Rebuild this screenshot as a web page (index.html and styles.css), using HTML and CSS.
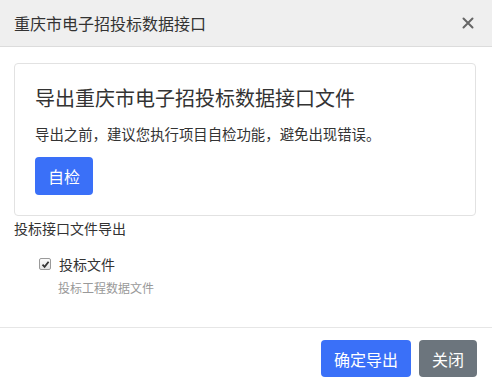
FILE: index.html
```html
<!DOCTYPE html>
<html lang="zh-CN">
<head>
    <meta charset="UTF-8">
    <meta name="viewport" content="width=device-width, initial-scale=1.0">
    <title>重庆市电子招投标数据接口</title>
    <link rel="stylesheet" href="styles.css">
</head>
<body>
    <div class="modal">
        <!-- Header -->
        <div class="modal-header">
            <span class="modal-title">重庆市电子招投标数据接口</span>
            <span class="close">
                <svg width="12" height="12" viewBox="0 0 12 12">
                    <path d="M1.5 1.5 L10.5 10.5 M10.5 1.5 L1.5 10.5" stroke="#666" stroke-width="2" stroke-linecap="round"/>
                </svg>
            </span>
        </div>

        <!-- Body -->
        <div class="modal-body">
            <div class="card">
                <h2>导出重庆市电子招投标数据接口文件</h2>
                <p>导出之前，建议您执行项目自检功能，避免出现错误。</p>
                <button class="btn btn-primary">自检</button>
            </div>

            <div class="section-title">投标接口文件导出</div>

            <div class="file-item">
                <label class="check-row">
                    <span class="checkbox">
                        <svg width="9" height="9" viewBox="0 0 9 9">
                            <path d="M1.5 4.6 L3.6 6.8 L7.6 1.8" stroke="#333" stroke-width="1.8" fill="none"/>
                        </svg>
                    </span>
                    投标文件
                </label>
                <div class="file-desc">投标工程数据文件</div>
            </div>
        </div>

        <!-- Footer -->
        <div class="modal-footer">
            <button class="btn btn-primary">确定导出</button>
            <button class="btn btn-secondary">关闭</button>
        </div>
    </div>
</body>
</html>
```

FILE: styles.css
```css
body {
    font-family: "Noto Sans CJK SC", "Liberation Sans", sans-serif;
    margin: 0;
    padding: 0;
    background-color: #fff;
    color: #333;
}

.modal {
    display: flex;
    flex-direction: column;
    height: 100vh;
}

/* Header */
.modal-header {
    display: flex;
    align-items: center;
    justify-content: space-between;
    height: 46px;
    padding: 0 18px 0 14px;
    background-color: #efefef;
    border-bottom: 1px solid #dcdcdc;
}

.modal-title {
    font-size: 16px;
    line-height: 20px;
}

.close {
    display: flex;
    cursor: pointer;
}

/* Body */
.modal-body {
    flex: 1;
    padding: 16px 16px 0 14px;
}

.card {
    border: 1px solid #e2e2e2;
    border-radius: 4px;
    padding: 22px 20px 20px;
}

.card h2 {
    margin: 0 0 12px;
    font-size: 20px;
    font-weight: normal;
    line-height: 24px;
}

.card p {
    margin: 0 0 12px;
    font-size: 14.4px;
    line-height: 23px;
}

.btn {
    font-family: inherit;
    font-size: 16px;
    line-height: 20px;
    color: #fff;
    border: none;
    border-radius: 4px;
    height: 38px;
    padding: 0 13px;
    cursor: pointer;
}

.btn-primary {
    background-color: #3a70f8;
}

.btn-secondary {
    background-color: #6c757d;
}

.section-title {
    margin-top: 2px;
    font-size: 14px;
    line-height: 20px;
}

.file-item {
    margin: 16px 0 0 25px;
}

.check-row {
    display: flex;
    align-items: center;
    font-size: 14px;
    line-height: 20px;
}

.checkbox {
    display: flex;
    align-items: center;
    justify-content: center;
    width: 10px;
    height: 10px;
    margin-right: 8px;
    border: 1px solid #9a9a9a;
    border-radius: 2px;
    background: linear-gradient(#fbfbfb, #e4e4e4);
}

.file-desc {
    margin: 5px 0 0 19px;
    font-size: 12px;
    line-height: 18px;
    color: #999;
}

/* Footer */
.modal-footer {
    display: flex;
    justify-content: flex-end;
    gap: 8px;
    padding: 12px 15px 11px;
    border-top: 1px solid #e6e6e6;
}

.modal-footer .btn {
    height: 37px;
    padding: 0 13px;
}
```
